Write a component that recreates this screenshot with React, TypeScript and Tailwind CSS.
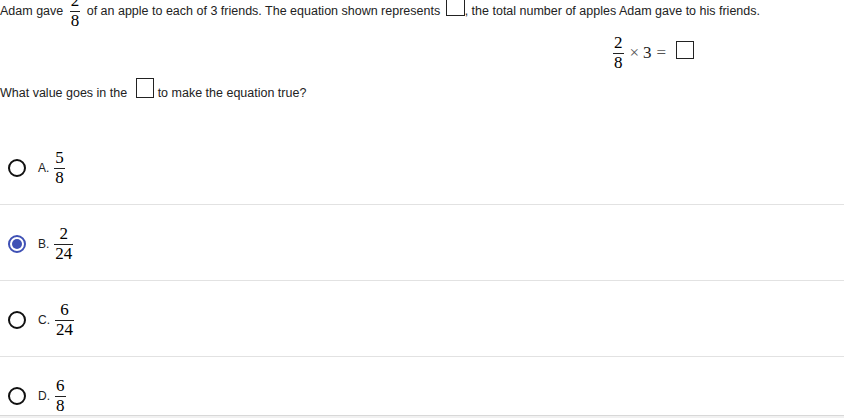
import React from "react";

function Frac({ n, d }: { n: string; d: string }) {
  return (
    <span className="inline-flex flex-col items-center font-['Liberation_Serif'] text-[17px] leading-[16px] text-black">
      <span className="px-px pb-[2px]">{n}</span>
      <span className="h-px w-full bg-[#222]" />
      <span className="px-px pt-px">{d}</span>
    </span>
  );
}

function Radio({ checked }: { checked?: boolean }) {
  if (checked) {
    return (
      <span className="flex h-[18px] w-[18px] items-center justify-center rounded-full border-2 border-[#3f51b5]">
        <span className="h-[10px] w-[10px] rounded-full bg-[#3f51b5]" />
      </span>
    );
  }
  return <span className="h-[18px] w-[18px] rounded-full border-2 border-[#111]" />;
}

const options = [
  { l: "A.", n: "5", d: "8" },
  { l: "B.", n: "2", d: "24", checked: true },
  { l: "C.", n: "6", d: "24" },
  { l: "D.", n: "6", d: "8" },
];

export default function App() {
  return (
    <div className="relative h-[418px] w-[844px] overflow-hidden bg-white font-['Liberation_Sans'] text-[12.5px] text-[#222]">
      <div className="-mt-[6px] flex h-[34px] items-center whitespace-pre">
        <span>Adam gave </span>
        <span className="mx-[3px]">
          <Frac n="2" d="8" />
        </span>
        <span> of an apple to each of 3 friends. The equation shown represents </span>
        <span className="mb-[10px] ml-[2px] h-[20px] w-[19px] border border-[#222]" />
        <span>, the total number of apples Adam gave to his friends.</span>
      </div>

      <div className="mt-[7px] flex h-[36px] items-center pl-[613px] font-['Liberation_Serif'] text-[17px] text-[#222]">
        <Frac n="2" d="8" />
        <span className="ml-[6px] text-[#555]">×</span>
        <span className="ml-[4px]">3</span>
        <span className="ml-[5px] text-[#555]">=</span>
        <span className="mb-[6px] ml-[10px] h-[18px] w-[18px] border border-[#222]" />
      </div>

      <div className="mt-[12px] flex h-[20px] items-center whitespace-pre">
        <span>What value goes in the </span>
        <span className="mb-[10px] ml-[5px] mr-[4px] h-[20px] w-[18px] border border-[#222]" />
        <span>to make the equation true?</span>
      </div>

      <div className="mt-[26px] flex flex-col">
        {options.map((o) => (
          <div key={o.l} className="flex h-[76px] items-center border-b border-[#e2e2e2] pl-[8px] pt-[2px]">
            <Radio checked={o.checked} />
            <span className="ml-[12px] text-[12px] text-[#222]">{o.l}</span>
            <span className="ml-[5px]">
              <Frac n={o.n} d={o.d} />
            </span>
          </div>
        ))}
      </div>

      <div className="fixed bottom-0 left-0 h-[3px] w-[844px] border-t border-[#d8d8d8] bg-[#f1f1f1]" />
    </div>
  );
}
